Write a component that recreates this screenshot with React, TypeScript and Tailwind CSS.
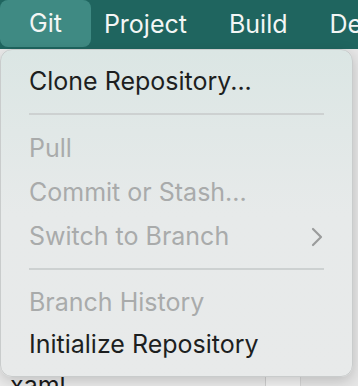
import React from "react";

const Separator = () => (
  <div className="pb-[12px] pt-[9px]">
    <div className="mx-[28px] h-[2px] bg-[#cdd1d1]" />
  </div>
);

const Item = ({
  label,
  disabled,
  submenu,
  short,
}: {
  label: string;
  disabled?: boolean;
  submenu?: boolean;
  short?: boolean;
}) => (
  <div
    className={`flex items-center justify-between pl-[28px] pr-[29px] text-[25px] ${
      short ? "h-[42px]" : "h-[44px]"
    } ${disabled ? "text-[#a9abab]" : "text-[#1d1f1f]"}`}
  >
    <span>{label}</span>
    {submenu && (
      <svg width="12" height="20" viewBox="0 0 12 20" fill="none">
        <path d="M2 2l8 8-8 8" stroke="#9a9c9c" strokeWidth="2.2" strokeLinecap="round" strokeLinejoin="round" />
      </svg>
    )}
  </div>
);

export default function App() {
  return (
    <div
      className="relative h-[386px] w-[358px] overflow-hidden bg-[#ececec]"
      style={{ fontFamily: "Inter, 'Noto Sans', sans-serif" }}
    >
      <div className="flex h-[49px] items-center gap-[42px] bg-[#1f655f] text-[25px] text-[#f3f6f5]">
        <div className="flex h-[47px] items-center self-start rounded-[8px] bg-[#3f8a83] px-[29px]">Git</div>
        <div className="-ml-[29px]">Project</div>
        <div>Build</div>
        <div>De</div>
      </div>
      <div className="flex h-[337px]">
        <div className="flex w-[266px] flex-col justify-end border-r border-[#cfcfcf] bg-[#ebebeb] pl-[10px] text-[25px] leading-[14px] text-[#1a1a1a]">
          <span className="translate-y-[6px]">xaml</span>
        </div>
        <div className="w-[34px] bg-[#f2f2f2]" />
        <div className="flex-1 border-l border-[#d6d6d6] bg-[#e6e6e6]" />
      </div>

      <div className="absolute left-0 top-[49px] h-[328px] w-[353px] rounded-[12px] border border-[#c9cccc] bg-gradient-to-b from-[#dbe6e4] via-[#e7eaea] to-[#e8eaea] pt-[10px] shadow-[0_4px_14px_rgba(0,0,0,0.18)]">
        <Item label="Clone Repository..." />
        <Separator />
        <Item label="Pull" disabled />
        <Item label="Commit or Stash..." disabled />
        <Item label="Switch to Branch" disabled submenu />
        <Separator />
        <Item label="Branch History" disabled short />
        <Item label="Initialize Repository" short />
      </div>
    </div>
  );
}
